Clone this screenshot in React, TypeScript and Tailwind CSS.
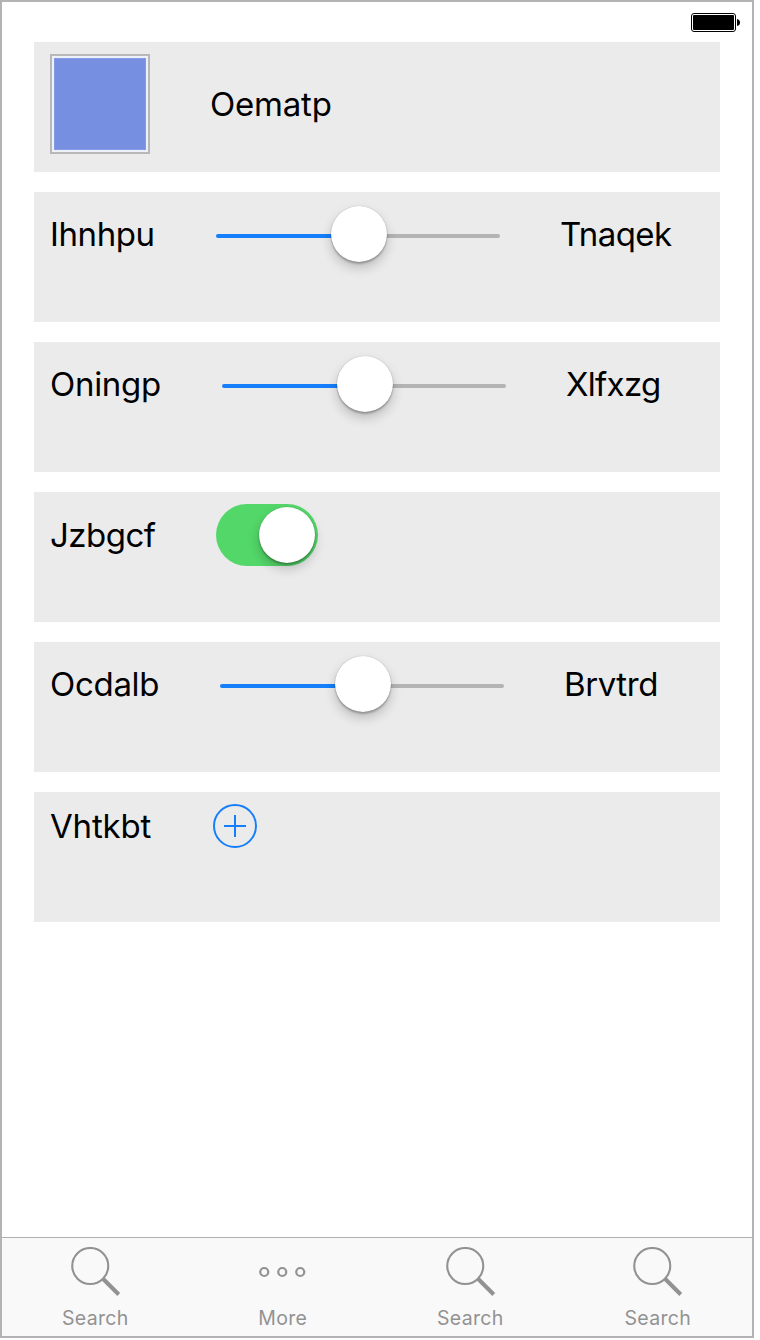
import React from "react";

const text = "whitespace-nowrap text-[33px] leading-10 text-black";
const knob =
  "size-14 shrink-0 rounded-full bg-white shadow-[0_0_1px_rgba(0,0,0,0.3),0_2px_2px_rgba(0,0,0,0.24),0_6px_12px_rgba(0,0,0,0.2)]";

function Row({ children }: { children: React.ReactNode }) {
  return <div className="flex h-[130px] shrink-0 items-start bg-[#ebebeb] pl-4">{children}</div>;
}

function Slider() {
  return (
    <div className="mt-3.5 flex h-14 w-[284px] shrink-0 items-center">
      <div className="mt-1 h-1 w-[116px] rounded-l-full bg-[#157efb]" />
      <div className={`z-10 -mx-px ${knob}`} />
      <div className="mt-1 h-1 flex-1 rounded-r-full bg-[#b4b4b4]" />
    </div>
  );
}

function SearchIcon() {
  return (
    <svg width="50" height="50" viewBox="0 0 50 50" fill="none" stroke="#929292">
      <circle cx="19.25" cy="19" r="18" strokeWidth="2.1" />
      <path d="M31.75 31.5 L47.75 47.5" strokeWidth="4" />
    </svg>
  );
}

function MoreIcon() {
  return (
    <svg width="50" height="50" viewBox="0 0 50 50" fill="none" stroke="#929292" strokeWidth="2.2">
      <circle cx="6.25" cy="25" r="4" />
      <circle cx="24.25" cy="25" r="4" />
      <circle cx="42.25" cy="25" r="4" />
    </svg>
  );
}

function Tab({ label, more }: { label: string; more?: boolean }) {
  return (
    <div className="flex flex-1 flex-col items-center pt-[9px] text-[#929292]">
      {more ? <MoreIcon /> : <SearchIcon />}
      <span className="mt-[9px] pr-px text-[19.5px] leading-6 tracking-[0.3px]">{label}</span>
    </div>
  );
}

export default function App() {
  return (
    <div className="h-[1340px] w-[760px] bg-white font-['Inter',sans-serif]">
      <div className="flex h-[1338px] w-[754px] flex-col border-2 border-[#b3b3b3] bg-white">
        <div className="flex h-10 shrink-0 justify-end pr-3 pt-[11px]">
          <svg width="50" height="19" viewBox="0 0 50 19">
            <rect x="1.5" y="0.5" width="44" height="18" rx="2.5" fill="none" stroke="#000" />
            <rect x="3" y="2" width="41" height="15" rx="1" fill="#000" />
            <path d="M47 6 Q50 6.5 50 9.5 Q50 12.5 47 13Z" fill="#000" />
          </svg>
        </div>
        <div className="flex flex-1 flex-col gap-5 px-8">
          <Row>
            <div className="mt-3 size-[100px] border-2 border-[#b8b8b8] bg-[#eef0fa] p-0.5">
              <div className="size-full border border-[#849ae4] bg-[#768fe1]" />
            </div>
            <span className={`ml-[60px] mt-[42px] tracking-[-0.2px] ${text}`}>Oematp</span>
          </Row>
          <Row>
            <span className={`mt-[22px] w-[166px] tracking-[-0.4px] ${text}`}>Ihnhpu</span>
            <Slider />
            <span className={`ml-[60px] mt-[22px] tracking-[-0.6px] ${text}`}>Tnaqek</span>
          </Row>
          <Row>
            <span className={`mt-[22px] w-[172px] tracking-[-0.3px] ${text}`}>Oningp</span>
            <Slider />
            <span className={`ml-[60px] mt-[22px] tracking-[-0.7px] ${text}`}>Xlfxzg</span>
          </Row>
          <Row>
            <span className={`mt-[23px] w-[166px] tracking-[-0.5px] ${text}`}>Jzbgcf</span>
            <div className="mt-3 flex h-[62px] w-[102px] justify-end rounded-full bg-[#53d769] p-[3px]">
              <div className={knob} />
            </div>
          </Row>
          <Row>
            <span className={`mt-[22px] w-[170px] tracking-[-0.3px] ${text}`}>Ocdalb</span>
            <Slider />
            <span className={`ml-[60px] mt-[22px] tracking-[-0.4px] ${text}`}>Brvtrd</span>
          </Row>
          <Row>
            <span className={`mt-[14px] w-[163px] tracking-[-0.2px] ${text}`}>Vhtkbt</span>
            <svg className="mt-3" width="44" height="44" viewBox="0 0 44 44" fill="none" stroke="#157efb" strokeWidth="2">
              <circle cx="22" cy="22" r="21" />
              <path d="M11 22H33M22 11V33" />
            </svg>
          </Row>
        </div>
        <div className="flex h-[99px] shrink-0 border-t border-[#b0b0b0] bg-[#f9f9f9]">
          <Tab label="Search" />
          <Tab label="More" more />
          <Tab label="Search" />
          <Tab label="Search" />
        </div>
      </div>
    </div>
  );
}
